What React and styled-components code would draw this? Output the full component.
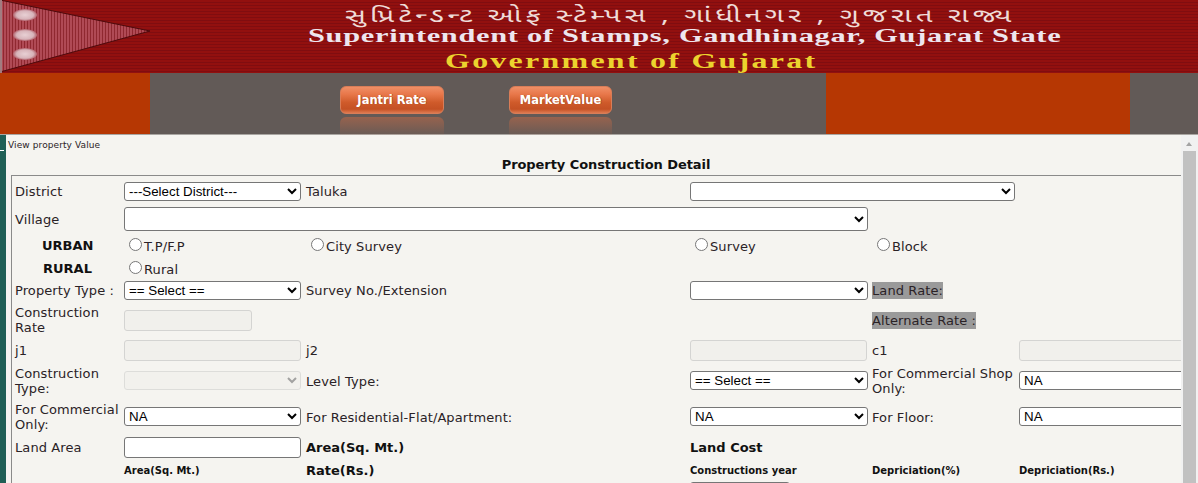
import React from "react";
import styled, { createGlobalStyle } from "styled-components";

const GlobalStyle = createGlobalStyle`
  html, body {
    margin: 0;
    padding: 0;
    height: 483px;
    overflow: hidden;
    background: #fff;
  }
`;

const Page = styled.div`
  width: 1198px;
  height: 483px;
  overflow: hidden;
  font-family: "DejaVu Sans", Verdana, sans-serif;
  font-size: 13px;
  letter-spacing: 0.1px;
  color: #2a2226;
`;

const Banner = styled.header`
  height: 73px;
  display: flex;
  background: repeating-linear-gradient(#92100f 0 2px, #800d10 2px 3px);
  overflow: hidden;
`;

const Titles = styled.div`
  display: flex;
  flex-direction: column;
  font-family: "Liberation Serif", "Times New Roman", serif;
  font-weight: 700;
  white-space: nowrap;
`;

const GujaratiLine = styled.div`
  margin: 7px 0 0 195px;
  height: 20px;
  line-height: 22px;
  font-family: "Noto Sans Gujarati", "Noto Sans", "DejaVu Sans", sans-serif;
  font-weight: 400;
  font-size: 19px;
  letter-spacing: 2.5px;
  color: #efdcd8;
  transform: scaleX(1.55);
  transform-origin: left center;
`;

const EnglishLine = styled.div`
  margin-left: 158px;
  height: 19px;
  line-height: 17px;
  font-size: 19px;
  letter-spacing: 0.43px;
  color: #eee6ee;
  transform: scaleX(1.6);
  transform-origin: left center;
`;

const GovLine = styled.div`
  margin: 4px 0 0 295px;
  height: 22px;
  line-height: 22px;
  font-size: 20px;
  letter-spacing: 1.4px;
  color: #ecd32e;
  transform: scaleX(1.6);
  transform-origin: left center;
`;

const Nav = styled.nav`
  height: 61px;
  display: grid;
  grid-template-columns: 150px 676px 304px 1fr;
  border-bottom: 1px solid #a9a6a2;
`;

const NavFill = styled.div`
  background: #b63703;
`;

const NavBand = styled.div`
  background: #625a57;
  display: flex;
  align-items: flex-start;
  padding: 13px 0 0 190px;
  gap: 65px;
`;

const NavButton = styled.a`
  position: relative;
  box-sizing: border-box;
  width: ${(p) => p.$width}px;
  height: 28px;
  border-radius: 6px;
  border: 1px solid #d97d58;
  background: linear-gradient(#f08f66 0, #e8774a 28%, #cf5a2a 60%, #c45124 85%, #de7a50 100%);
  font-family: "DejaVu Sans", Verdana, sans-serif;
  font-size: 11.5px;
  font-weight: 700;
  letter-spacing: 0;
  line-height: 26px;
  text-align: center;
  color: #fff;
  text-shadow: 1px 0 0 rgba(120, 50, 10, 0.45);
  white-space: nowrap;

  &::after {
    content: "";
    position: absolute;
    left: -1px;
    right: -1px;
    top: 30px;
    height: 24px;
    border-radius: 6px 6px 0 0;
    background: linear-gradient(rgba(224, 110, 65, 0.42), rgba(98, 90, 87, 0) 85%);
  }
`;

const Body = styled.div`
  display: flex;
  height: 348px;
`;

const SideStrip = styled.div`
  position: relative;
  width: 6px;
  background: #1f5f55;

  &::after {
    content: "";
    position: absolute;
    left: 0;
    top: 15px;
    width: 4px;
    height: 1px;
    background: #fff;
  }
`;

const Content = styled.main`
  position: relative;
  z-index: 1;
  width: 1175px;
  overflow: hidden;
  background: #f5f4f0;
`;

const Crumb = styled.div`
  height: 19px;
  padding: 4px 0 0 2px;
  box-sizing: border-box;
  font-size: 9px;
  line-height: 13px;
`;

const Heading = styled.h2`
  box-sizing: border-box;
  margin: 0 0 0 5px;
  padding-left: 20px;
  height: 22px;
  line-height: 21px;
  text-align: center;
  font-size: 13px;
  font-weight: 700;
  letter-spacing: -0.07px;
  color: #111;
  border-bottom: 1px solid #8a8a8a;
`;

const Form = styled.div`
  margin-left: 5px;
  padding-left: 3px;
  border-left: 1px solid #8a8a8a;
  display: grid;
  grid-template-columns: 109px 182px 384px 182px 147px 177px;
  grid-template-rows: 30px 26px 26px 20px 24px 36px 24px 38px 34px 26px 20px 24px;
  align-items: center;
`;

const Label = styled.div`
  line-height: 15px;
`;

const Strong = styled.div`
  font-weight: 700;
  letter-spacing: 0;
  color: #111;
`;

const Small = styled.div`
  font-size: 10px;
  font-weight: 700;
  letter-spacing: 0;
  color: #111;
  white-space: nowrap;
`;

const ZoneLabel = styled.div`
  font-weight: 700;
  letter-spacing: 0;
  color: #111;
  padding-left: ${(p) => p.$indent}px;
`;

const Marked = styled.span`
  background: #9a9a9a;
  padding: 1px 0;
`;

const Field = styled.select`
  box-sizing: border-box;
  display: block;
  width: ${(p) => p.$width}px;
  height: ${(p) => p.$height || 19}px;
  margin: 0 0 ${(p) => (p.$lift ? 1 : 0)}px;
  border: 1px solid #767676;
  border-radius: 3px;
  background-color: #fff;
  font-family: "Liberation Sans", Arial, sans-serif;
  font-size: 13.33px;
  letter-spacing: 0;
  grid-column: ${(p) => p.$span || "auto"};

  &:disabled {
    border-color: #d4d4d2;
    background-color: #f1f0ec;
  }
`;

const TextBox = styled.input`
  box-sizing: border-box;
  display: block;
  width: ${(p) => p.$width}px;
  height: 21px;
  margin: 0;
  padding: 1px 4px;
  border: 1px solid #767676;
  border-radius: 3px;
  background: #fff;
  color: #111;
  font-family: "Liberation Sans", Arial, sans-serif;
  font-size: 13.33px;
  letter-spacing: 0;

  &:disabled {
    border-color: #d4d4d2;
    background: #f1f0ec;
  }
`;

const RadioLabel = styled.label`
  display: flex;
  align-items: center;
  padding-top: 2px;
  line-height: 15px;
`;

const Radio = styled.input`
  margin: 0 2px 4px 5px;
`;

const Track = styled.div`
  position: relative;
  width: 17px;
  background: #f1f1f1;

  &::before {
    content: "";
    position: absolute;
    left: 5px;
    top: 7px;
    border: 3.5px solid transparent;
    border-top: 0;
    border-bottom: 4px solid #a3a3a3;
  }
`;

const Thumb = styled.div`
  margin: 16px 2px 0;
  height: 332px;
  background: #c1c1c1;
`;

const Flag = () => (
  <svg width="150" height="73" viewBox="0 0 150 73" style={{ flex: "none" }}>
    <defs>
      <pattern id="pennant" width="3" height="3" patternUnits="userSpaceOnUse">
        <rect width="3" height="3" fill="#b04a55" />
        <rect width="1" height="3" fill="#8f2830" />
      </pattern>
      <radialGradient id="dot">
        <stop offset="0" stopColor="#e8d0d4" />
        <stop offset="0.7" stopColor="#d7b4ba" />
        <stop offset="1" stopColor="#b2626c" />
      </radialGradient>
    </defs>
    <path d="M0 0 L150 31 L0 72 Z" fill="url(#pennant)" stroke="#4d0a0c" strokeWidth="1" />
    <rect x="0" y="0" width="2" height="73" fill="#a27c80" />
    <ellipse cx="25" cy="15" rx="12" ry="6" fill="url(#dot)" />
    <ellipse cx="25" cy="35" rx="12" ry="6" fill="url(#dot)" />
    <ellipse cx="25" cy="54" rx="12" ry="6" fill="url(#dot)" />
  </svg>
);

const Option = ({ name, children }) => (
  <RadioLabel>
    <Radio type="radio" name={name} />
    {children}
  </RadioLabel>
);

const Choice = ({ text, ...rest }) => (
  <Field {...rest}>
    <option>{text}</option>
  </Field>
);

export default function App() {
  return (
    <Page>
      <GlobalStyle />
      <Banner>
        <Flag />
        <Titles>
          <GujaratiLine>સુપ્રિટેન્ડન્ટ ઓફ સ્ટેમ્પસ , ગાંધીનગર , ગુજરાત રાજ્ય</GujaratiLine>
          <EnglishLine>Superintendent of Stamps, Gandhinagar, Gujarat State</EnglishLine>
          <GovLine>Government of Gujarat</GovLine>
        </Titles>
      </Banner>
      <Nav>
        <NavFill />
        <NavBand>
          <NavButton $width={104}>Jantri Rate</NavButton>
          <NavButton $width={103}>MarketValue</NavButton>
        </NavBand>
        <NavFill />
        <NavBand />
      </Nav>
      <Body>
        <SideStrip />
        <Content>
          <Crumb>View property Value</Crumb>
          <Heading>Property Construction Detail</Heading>
          <Form>
            <Label>District</Label>
            <Choice $width={177} text="---Select District---" />
            <Label>Taluka</Label>
            <Choice $width={325} $span="4 / 6" text="" />
            <span />

            <Label>Village</Label>
            <Choice $width={744} $height={24} $span="2 / 5" text="" />
            <span />
            <span />

            <ZoneLabel $indent={27}>URBAN</ZoneLabel>
            <Option name="zone">T.P/F.P</Option>
            <Option name="zone">City Survey</Option>
            <Option name="zone">Survey</Option>
            <Option name="zone">Block</Option>
            <span />

            <ZoneLabel $indent={28}>RURAL</ZoneLabel>
            <Option name="zone">Rural</Option>
            <span />
            <span />
            <span />
            <span />

            <Label>Property Type :</Label>
            <Choice $width={177} text="== Select ==" />
            <Label>Survey No./Extension</Label>
            <Choice $width={178} text="" />
            <Label><Marked>Land Rate:</Marked></Label>
            <span />

            <Label>Construction Rate</Label>
            <TextBox $width={128} disabled />
            <span />
            <span />
            <Label><Marked>Alternate Rate :</Marked></Label>
            <span />

            <Label>j1</Label>
            <TextBox $width={177} disabled />
            <Label>j2</Label>
            <TextBox $width={177} disabled />
            <Label>c1</Label>
            <TextBox $width={177} disabled />

            <Label>Construction Type:</Label>
            <Choice $width={177} $lift text="" disabled />
            <Label>Level Type:</Label>
            <Choice $width={178} $lift text="== Select ==" />
            <Label>For Commercial Shop Only:</Label>
            <Choice $width={200} $lift text="NA" />

            <Label>For Commercial Only:</Label>
            <Choice $width={177} $lift text="NA" />
            <Label>For Residential-Flat/Apartment:</Label>
            <Choice $width={178} $lift text="NA" />
            <Label>For Floor:</Label>
            <Choice $width={200} $lift text="NA" />

            <Label>Land Area</Label>
            <TextBox $width={177} />
            <Strong>Area(Sq. Mt.)</Strong>
            <Strong>Land Cost</Strong>
            <span />
            <span />

            <span />
            <Small>Area(Sq. Mt.)</Small>
            <Strong>Rate(Rs.)</Strong>
            <Small>Constructions year</Small>
            <Small>Depriciation(%)</Small>
            <Small>Depriciation(Rs.)</Small>

            <span />
            <span />
            <span />
            <TextBox $width={100} />
          </Form>
        </Content>
        <Track>
          <Thumb />
        </Track>
      </Body>
    </Page>
  );
}
